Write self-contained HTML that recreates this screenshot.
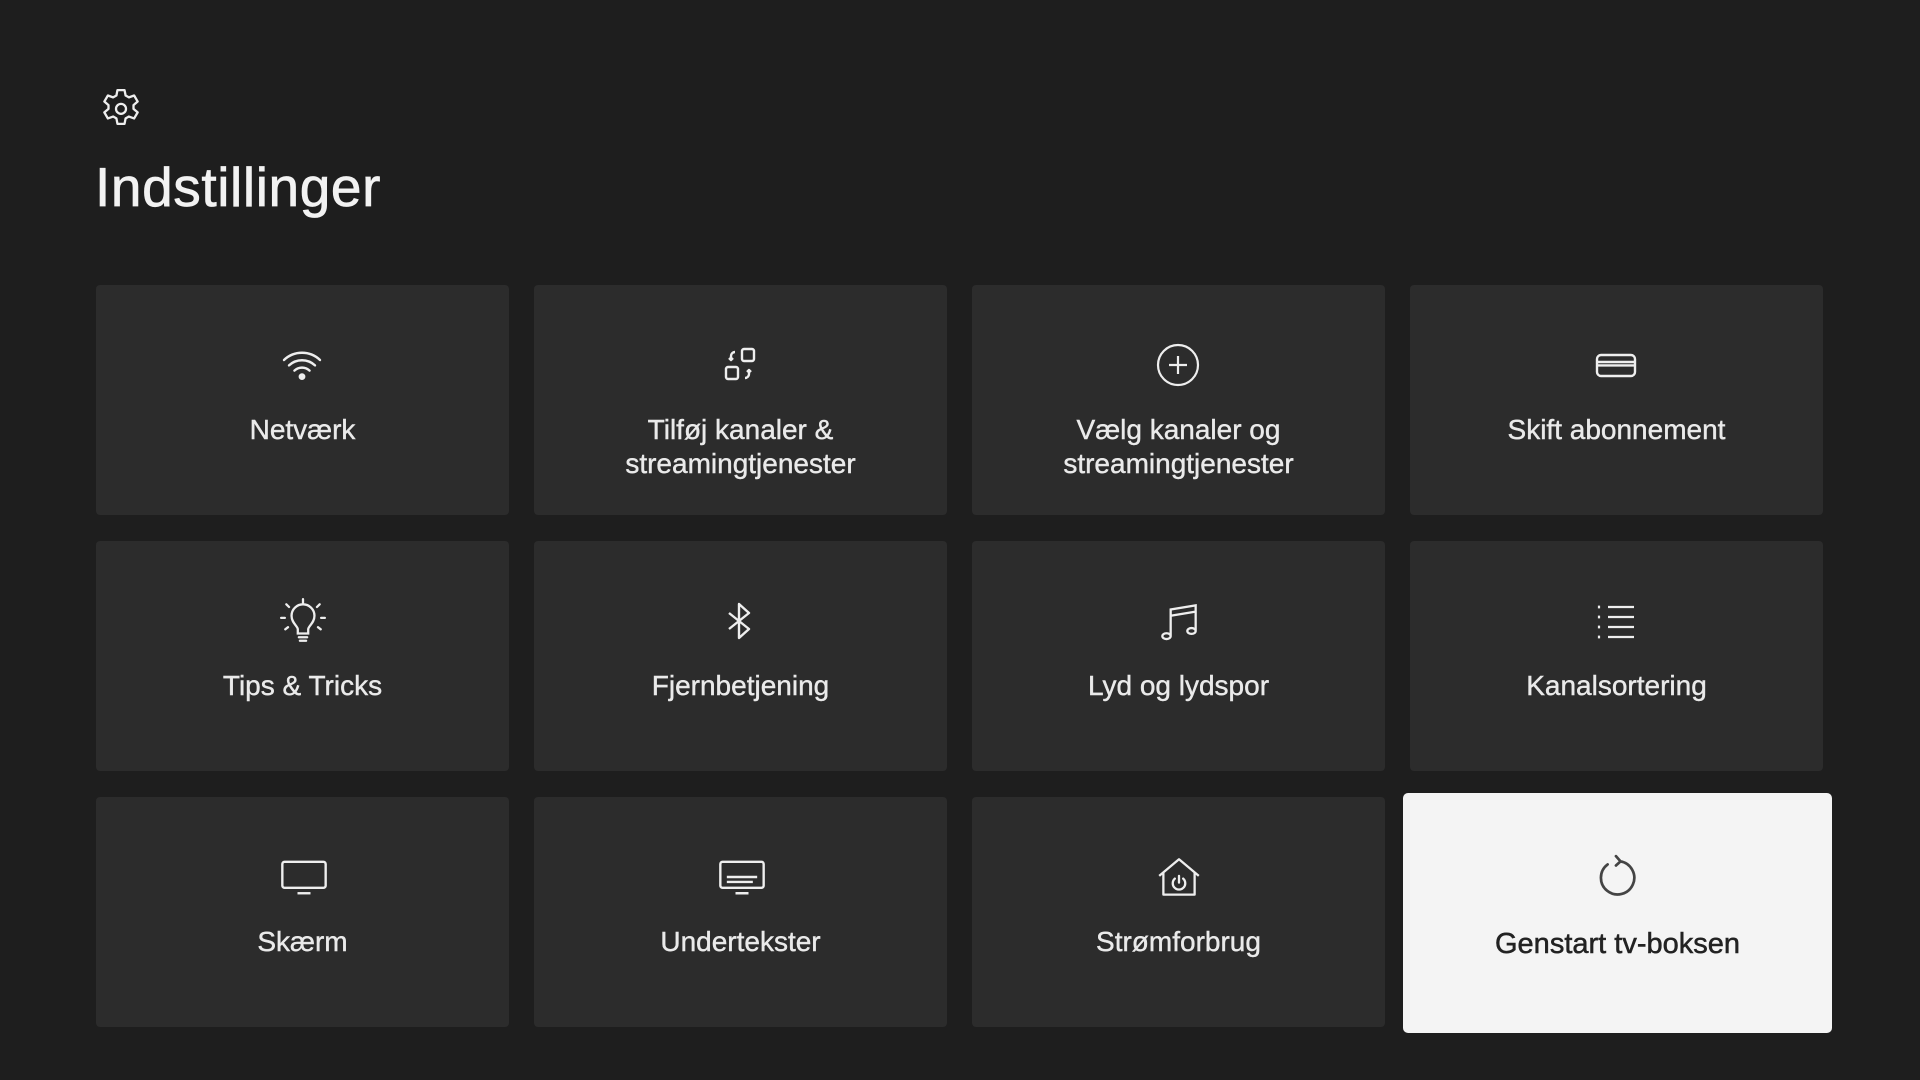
<!DOCTYPE html>
<html><head><meta charset="utf-8"><style>
html,body{margin:0;padding:0;width:1920px;height:1080px;background:#1e1e1e;overflow:hidden;font-family:"Liberation Sans",sans-serif;}
.gear{position:absolute;left:96px;top:83px;}
h1{position:absolute;left:95px;top:155px;margin:0;font-size:55px;font-weight:normal;color:#f2f2f2;letter-spacing:0.6px;-webkit-text-stroke:0.7px #f2f2f2;}
.t{position:absolute;width:413px;height:230px;background:#2c2c2c;border-radius:4px;color:#eaeaea;}
.t svg{position:absolute;left:182px;top:56px;}
.t .l{position:absolute;left:0;right:0;top:128px;text-align:center;font-size:28px;line-height:34px;-webkit-text-stroke:0.4px #eaeaea;}
.h{position:absolute;left:1403px;top:793px;width:429px;height:240px;background:#f4f4f4;border-radius:5px;color:#222;}
.h svg{position:absolute;left:189px;top:60px;}
.h .l{position:absolute;left:0;right:0;top:133px;text-align:center;font-size:29px;line-height:36px;-webkit-text-stroke:0.5px #222;}
</style></head><body>
<svg class="gear" width="50" height="50" viewBox="0 0 24 24" fill="none" stroke="#eee" stroke-width="1.1" stroke-linejoin="round"><path d="M10.3 2h3.4l.5 2.6 1.6.9 2.5-.9 1.7 2.9-2 1.7v1.8l2 1.7-1.7 2.9-2.5-.9-1.6.9-.5 2.6h-3.4l-.5-2.6-1.6-.9-2.5.9-1.7-2.9 2-1.7v-1.8l-2-1.7 1.7-2.9 2.5.9 1.6-.9z" transform="translate(0 1.4)"/><circle cx="12" cy="12.4" r="2.4"/></svg>
<h1>Indstillinger</h1>

<div class="t" style="left:96px;top:285px"><svg width="48" height="48" viewBox="0 0 24 24" fill="none" stroke="#eee" stroke-width="1.2" stroke-linecap="round"><path d="M3 9.5a13 13 0 0 1 18 0M5.5 12.2a9.5 9.5 0 0 1 13 0M8.2 14.8a5.6 5.6 0 0 1 7.6 0"/><circle cx="12" cy="17.8" r="1.1" fill="#eee"/></svg><div class="l">Netværk</div></div>
<div class="t" style="left:534px;top:285px"><svg width="48" height="48" viewBox="0 0 24 24" fill="none" stroke="#eee" stroke-width="1.2" stroke-linejoin="round"><rect x="13" y="4" width="6" height="6" rx="1"/><rect x="5" y="13" width="6" height="6" rx="1"/><path d="M9.5 5.5a2 2 0 0 0-2 2v2M6.5 8.5l1 1 1-1M14.5 18.5a2 2 0 0 0 2-2v-2M15.5 15.5l1-1 1 1"/></svg><div class="l">Tilføj kanaler &amp;<br>streamingtjenester</div></div>
<div class="t" style="left:972px;top:285px"><svg width="48" height="48" viewBox="0 0 24 24" fill="none" stroke="#eee" stroke-width="1.1"><circle cx="12" cy="12" r="10"/><path d="M12 7.5v9M7.5 12h9"/></svg><div class="l">Vælg kanaler og<br>streamingtjenester</div></div>
<div class="t" style="left:1410px;top:285px"><svg width="48" height="48" viewBox="0 0 24 24" fill="none" stroke="#eee" stroke-width="1.2"><rect x="2.5" y="7" width="19" height="10.5" rx="2"/><path d="M2.5 10.5h19M2.5 12.2h19"/></svg><div class="l">Skift abonnement</div></div>

<div class="t" style="left:96px;top:541px"><svg width="50" height="50" viewBox="0 0 24 24" fill="none" stroke="#eee" stroke-width="1.1" stroke-linecap="round"><path d="M9.5 17.5v-2c0-1.5-3-3-3-6.5a5.5 5.5 0 0 1 11 0c0 3.5-3 5-3 6.5v2zM10 19.3h4M10.5 21h3M12 1v1.8M4 3.5l1.3 1.3M20 3.5l-1.3 1.3M1.5 10h1.8M20.7 10h1.8M3.5 15.5l1.3-1M20.5 15.5l-1.3-1"/></svg><div class="l">Tips &amp; Tricks</div></div>
<div class="t" style="left:534px;top:541px"><svg width="48" height="48" viewBox="0 0 24 24" fill="none" stroke="#eee" stroke-width="1.2" stroke-linejoin="round"><path d="M6.5 8l10 8-5 4.5V3.5l5 4.5-10 8"/></svg><div class="l">Fjernbetjening</div></div>
<div class="t" style="left:972px;top:541px"><svg width="50" height="50" viewBox="0 0 24 24" fill="none" stroke="#eee" stroke-width="1.1"><path d="M8 18.5V6l12-2v12M8 9l12-2"/><ellipse cx="6" cy="18.8" rx="2" ry="1.4"/><ellipse cx="18" cy="16.3" rx="2" ry="1.4"/></svg><div class="l">Lyd og lydspor</div></div>
<div class="t" style="left:1410px;top:541px"><svg width="48" height="48" viewBox="0 0 24 24" fill="none" stroke="#eee" stroke-width="1.1"><path d="M8 5h13M8 10h13M8 15h13M8 20h13M3.5 4.3v1.4M3.5 9.3v1.4M3.5 14.3v1.4M3.5 19.3v1.4"/></svg><div class="l">Kanalsortering</div></div>

<div class="t" style="left:96px;top:797px"><svg width="52" height="48" viewBox="0 0 24 22" fill="none" stroke="#eee" stroke-width="1.1"><rect x="2" y="4" width="20" height="12" rx="1"/><path d="M9 18.5h6"/></svg><div class="l">Skærm</div></div>
<div class="t" style="left:534px;top:797px"><svg width="52" height="48" viewBox="0 0 24 22" fill="none" stroke="#eee" stroke-width="1.1"><rect x="2" y="4" width="20" height="12" rx="1"/><path d="M9 18.5h6M5 11h14M5 13.3h12"/></svg><div class="l">Undertekster</div></div>
<div class="t" style="left:972px;top:797px"><svg width="50" height="50" viewBox="0 0 24 24" fill="none" stroke="#eee" stroke-width="1.1" stroke-linejoin="round"><path d="M2.5 11L12 3l9.5 8M4.5 9.5V20h15V9.5"/><path d="M10 12.3a3 3 0 1 0 4 0M12 11v3.2" stroke-linecap="round"/></svg><div class="l">Strømforbrug</div></div>

<div class="h"><svg width="50" height="50" viewBox="0 0 24 24" fill="none" stroke="#444" stroke-width="1.3" stroke-linecap="round" stroke-linejoin="round"><path d="M7.5 5.5a8 8 0 1 0 6-1.5M11.5 1.5l2.2 2.5-2.2 2"/></svg><div class="l">Genstart tv-boksen</div></div>
</body></html>
